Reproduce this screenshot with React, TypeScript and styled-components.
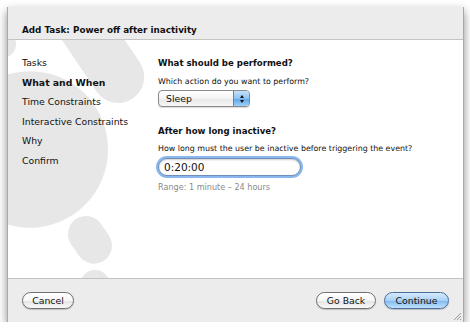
import React from "react";
import styled, { createGlobalStyle } from "styled-components";

const GlobalStyle = createGlobalStyle`
  body {
    margin: 0;
    background: #ffffff;
    font-family: "DejaVu Sans", "Noto Sans", sans-serif;
    color: #111;
  }
`;

const Window = styled.div`
  margin: 7px 0 0 7px;
  width: 457px;
  height: 315px;
  box-sizing: border-box;
  display: flex;
  flex-direction: column;
  border-left: 1px solid #a9a9a9;
  border-right: 1px solid #a9a9a9;
  box-shadow: 0 4px 9px rgba(0, 0, 0, 0.45);
`;

const Header = styled.div`
  height: 33px;
  box-sizing: border-box;
  padding: 13px 0 0 14px;
  background: #ececec;
  border-bottom: 1px solid #c4c4c4;
  font-size: 8.8px;
  font-weight: bold;
  line-height: 20px;
`;

const Body = styled.div`
  flex: 1;
  position: relative;
  overflow: hidden;
  background: #ffffff;
  display: flex;
  padding-top: 13px;
`;

const Watermark = styled.svg`
  position: absolute;
  left: 0;
  top: 0;
  width: 100%;
  height: 100%;
  z-index: 0;
`;

const Sidebar = styled.ul`
  position: relative;
  list-style: none;
  margin: 0;
  padding: 0 0 0 14px;
  width: 150px;
  box-sizing: border-box;
`;

const Step = styled.li<{ $active?: boolean }>`
  font-size: 9.3px;
  line-height: 19.6px;
  white-space: nowrap;
  font-weight: ${(p) => (p.$active ? "bold" : "normal")};
`;

const Main = styled.div`
  position: relative;
  flex: 1;
  display: flex;
  flex-direction: column;
  align-items: flex-start;
`;

const Heading = styled.h2<{ $gap?: number }>`
  margin: ${(p) => p.$gap ?? 0}px 0 0;
  font-size: 8.6px;
  font-weight: bold;
  line-height: 20px;
  white-space: nowrap;
`;

const Desc = styled.p<{ $gap?: number }>`
  margin: ${(p) => p.$gap ?? 0}px 0 0;
  font-size: 7.9px;
  line-height: 16px;
  white-space: nowrap;
`;

const Popup = styled.div`
  width: 92px;
  height: 17px;
  box-sizing: border-box;
  display: flex;
  border: 1px solid #8a8a8a;
  border-radius: 4px;
  overflow: hidden;
  background: linear-gradient(#ffffff, #f4f4f4 50%, #e6e6e6 51%, #f7f7f7);
  box-shadow: 0 1px 1px rgba(0, 0, 0, 0.15);
`;

const PopupLabel = styled.span`
  flex: 1;
  padding-left: 7px;
  font-size: 9.3px;
  line-height: 15px;
`;

const PopupArrows = styled.span`
  width: 15px;
  display: flex;
  flex-direction: column;
  align-items: center;
  justify-content: center;
  gap: 2px;
  border-left: 1px solid #5d86b8;
  background: linear-gradient(#c5e1fa, #8fc2f1 50%, #5ea4ea 51%, #9ed0fb);
`;

const Arrow = styled.span<{ $up?: boolean }>`
  width: 0;
  height: 0;
  border-left: 2.5px solid transparent;
  border-right: 2.5px solid transparent;
  ${(p) =>
    p.$up ? "border-bottom: 3px solid #111;" : "border-top: 3px solid #111;"}
`;

const Field = styled.div`
  margin-top: 1px;
  width: 143px;
  height: 18px;
  box-sizing: border-box;
  border: 1px solid #6f8fb8;
  border-radius: 9px;
  box-shadow: 0 0 0 2px #8ab7ee, inset 0 1px 2px rgba(0, 0, 0, 0.2);
  padding-left: 5px;
  font-size: 10.5px;
  line-height: 16px;
  background: #fff;
`;

const Hint = styled.p`
  margin: 3px 0 0;
  font-size: 8.1px;
  line-height: 16px;
  color: #8a8a8a;
`;

const Footer = styled.div`
  position: relative;
  height: 44px;
  box-sizing: border-box;
  background: #ececec;
  border-top: 1px solid #c2c2c2;
  display: flex;
  align-items: center;
  padding: 0 14px 0 14px;
  gap: 8px;
`;

const Spacer = styled.div`
  flex: 1;
`;

const Button = styled.button<{ $width: number; $primary?: boolean }>`
  width: ${(p) => p.$width}px;
  height: 17px;
  padding: 0;
  border-radius: 9px;
  font-family: inherit;
  font-size: 9.3px;
  line-height: 15px;
  color: #111;
  border: 1px solid ${(p) => (p.$primary ? "#4b6d9c" : "#6f6f6f")};
  background: ${(p) =>
    p.$primary
      ? "linear-gradient(#d6ebfc, #a9d1f5 50%, #7fb8ee 51%, #bfe2fd)"
      : "linear-gradient(#ffffff, #f6f6f6 50%, #e4e4e4 51%, #f8f8f8)"};
  box-shadow: 0 1px 1px rgba(0, 0, 0, 0.2);
`;

const Grip = styled.svg`
  position: absolute;
  right: 1px;
  bottom: 1px;
`;

const steps = [
  "Tasks",
  "What and When",
  "Time Constraints",
  "Interactive Constraints",
  "Why",
  "Confirm",
];

export default function App() {
  return (
    <>
      <GlobalStyle />
      <Window>
        <Header>Add Task: Power off after inactivity</Header>
        <Body>
          <Watermark viewBox="0 0 455 237" preserveAspectRatio="none">
            <g fill="#e7e7e7">
              <circle cx="22" cy="109" r="78" />
              <circle cx="-6" cy="4" r="14" />
              <rect
                x="-80"
                y="-26"
                width="160"
                height="52"
                rx="26"
                transform="translate(80 -8) rotate(56)"
              />
              <rect
                x="-25"
                y="-18"
                width="50"
                height="36"
                rx="18"
                transform="translate(82 199) rotate(55)"
              />
              <circle cx="87" cy="244" r="15" />
            </g>
          </Watermark>
          <Sidebar>
            {steps.map((s) => (
              <Step key={s} $active={s === "What and When"}>
                {s}
              </Step>
            ))}
          </Sidebar>
          <Main>
            <Heading>What should be performed?</Heading>
            <Desc $gap={1}>Which action do you want to perform?</Desc>
            <Popup>
              <PopupLabel>Sleep</PopupLabel>
              <PopupArrows>
                <Arrow $up />
                <Arrow />
              </PopupArrows>
            </Popup>
            <Heading $gap={14}>After how long inactive?</Heading>
            <Desc>
              How long must the user be inactive before triggering the event?
            </Desc>
            <Field>0:20:00</Field>
            <Hint>Range: 1 minute – 24 hours</Hint>
          </Main>
        </Body>
        <Footer>
          <Button $width={52}>Cancel</Button>
          <Spacer />
          <Button $width={60}>Go Back</Button>
          <Button $width={65} $primary>
            Continue
          </Button>
          <Grip width="10" height="10" viewBox="0 0 10 10">
            <g stroke="#9a9a9a" strokeWidth="1">
              <line x1="9" y1="2" x2="2" y2="9" />
              <line x1="9" y1="5" x2="5" y2="9" />
              <line x1="9" y1="8" x2="8" y2="9" />
            </g>
          </Grip>
        </Footer>
      </Window>
    </>
  );
}
